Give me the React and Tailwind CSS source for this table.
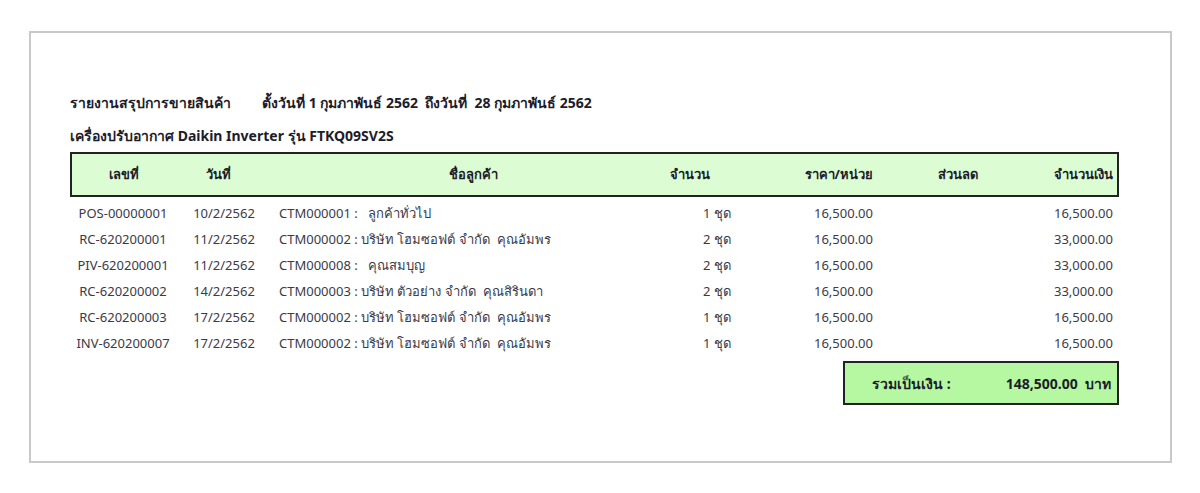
import React from "react";

const rows = [
  { no: "POS-00000001", date: "10/2/2562", customer: "CTM000001 :   ลูกค้าทั่วไป", qty: "1 ชุด", price: "16,500.00", amount: "16,500.00" },
  { no: "RC-620200001", date: "11/2/2562", customer: "CTM000002 : บริษัท โฮมซอฟต์ จำกัด  คุณอัมพร", qty: "2 ชุด", price: "16,500.00", amount: "33,000.00" },
  { no: "PIV-620200001", date: "11/2/2562", customer: "CTM000008 :   คุณสมบุญ", qty: "2 ชุด", price: "16,500.00", amount: "33,000.00" },
  { no: "RC-620200002", date: "14/2/2562", customer: "CTM000003 : บริษัท ตัวอย่าง จำกัด  คุณสิรินดา", qty: "2 ชุด", price: "16,500.00", amount: "33,000.00" },
  { no: "RC-620200003", date: "17/2/2562", customer: "CTM000002 : บริษัท โฮมซอฟต์ จำกัด  คุณอัมพร", qty: "1 ชุด", price: "16,500.00", amount: "16,500.00" },
  { no: "INV-620200007", date: "17/2/2562", customer: "CTM000002 : บริษัท โฮมซอฟต์ จำกัด  คุณอัมพร", qty: "1 ชุด", price: "16,500.00", amount: "16,500.00" },
];

export default function App() {
  return (
    <div className="w-[1200px] h-[493px] bg-white pt-[31px] pl-[29px] font-['Tahoma','Noto_Sans','Liberation_Sans',sans-serif]">
      <div className="w-[1143px] h-[432px] border-2 border-[#c9c9c9] pl-[39px] pt-[59px]">
        {/* Title */}
        <div className="flex h-[20px] items-center text-[14px] font-bold text-[#1c1c2a]">
          <span className="w-[192px]">รายงานสรุปการขายสินค้า</span>
          <span className="whitespace-pre">ตั้งวันที่ 1 กุมภาพันธ์ 2562  ถึงวันที่  28 กุมภาพันธ์ 2562</span>
        </div>
        <div className="mt-[13px] flex h-[20px] items-center text-[14px] font-bold text-[#1c1c2a]">
          เครื่องปรับอากาศ Daikin Inverter รุ่น FTKQ09SV2S
        </div>

        {/* Table header */}
        <div className="mt-[7px] flex h-[45px] w-[1049px] items-center border-2 border-[#222] bg-[#dcfcd4] text-[13px] font-bold text-[#1c1c2a]">
          <div className="w-[104px] text-center">เลขที่</div>
          <div className="w-[94px] pr-[10px] text-center">วันที่</div>
          <div className="w-[392px] pl-[14px] text-center">ชื่อลูกค้า</div>
          <div className="w-[56px] text-center">จำนวน</div>
          <div className="w-[155px] text-right">ราคา/หน่วย</div>
          <div className="w-[170px] text-center">ส่วนลด</div>
          <div className="w-[70px] text-right">จำนวนเงิน</div>
        </div>

        {/* Rows */}
        <div className="mt-[4px] text-[13px] text-[#3a3a48]">
          {rows.map((r) => (
            <div key={r.no + r.date} className="flex h-[26px] items-center">
              <div className="w-[106px] text-center">{r.no}</div>
              <div className="w-[96px] text-center">{r.date}</div>
              <div className="w-[418px] whitespace-pre pl-[7px]">{r.customer}</div>
              <div className="w-[54px] text-center">{r.qty}</div>
              <div className="w-[129px] text-right">{r.price}</div>
              <div className="w-[170px]"></div>
              <div className="w-[70px] text-right">{r.amount}</div>
            </div>
          ))}
        </div>

        {/* Total */}
        <div className="mt-[4px] flex justify-end w-[1049px]">
          <div className="flex h-[44px] w-[276px] items-center border-2 border-[#222] bg-[#b6f7a2] pl-[27px] pr-[6px] text-[14px] font-bold text-[#1c1c2a]">
            <span>รวมเป็นเงิน :</span>
            <span className="ml-auto whitespace-pre">148,500.00  บาท</span>
          </div>
        </div>
      </div>
    </div>
  );
}
